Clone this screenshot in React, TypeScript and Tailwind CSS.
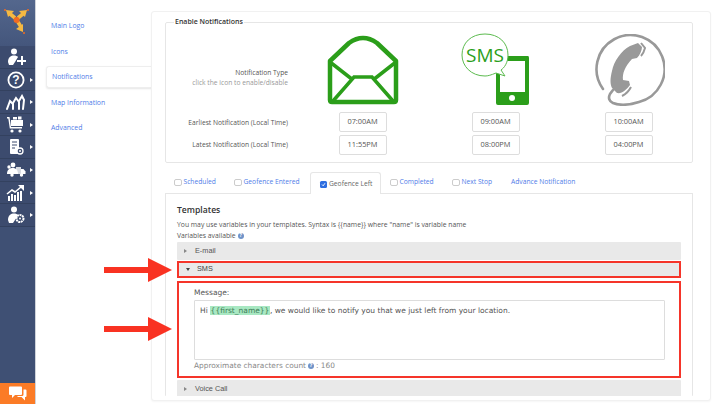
import React from "react";

const W = "#ffffff";

const Row = ({ caret = true, children }: { caret?: boolean; children: React.ReactNode }) => (
  <div className="relative flex h-[22.6px] items-center justify-center border-b border-[#33415f] bg-[#3c4b6e]">
    <div className="absolute left-[6px] top-[2px] flex h-[18px] w-[20px] items-center justify-center">{children}</div>
    {caret && <div className="absolute left-[30px] top-[9px] h-0 w-0 border-y-[2.5px] border-l-[3px] border-y-transparent border-l-white" />}
  </div>
);

const Logo = () => (
  <svg width="30" height="36" viewBox="0 0 30 36">
    <g stroke="#f5b942" strokeWidth="3.6" fill="none">
      <path d="M12 17 L6 12" /><path d="M15 17 L21 12" /><path d="M15 21 L18 26" />
    </g>
    <path d="M3 9 L11 10 L5 16Z M24 9 L16 10 L22 16Z M20 31 L13 28 L20 23Z" fill="#f5b942" />
    <circle cx="13.6" cy="19" r="3" fill="#f26b21" />
    <circle cx="2" cy="9" r="1" fill="#f26b21" /><circle cx="25" cy="9" r="1" fill="#f26b21" /><circle cx="21" cy="32" r="1" fill="#f26b21" />
  </svg>
);

const Person = ({ extra }: { extra: React.ReactNode }) => (
  <svg width="20" height="18" viewBox="0 0 20 18" fill={W}>
    <circle cx="8" cy="3.5" r="3" />
    <path d="M2 14 C2 9 5 7.5 8 7.5 C10 7.5 11 8 12 9 L9 14 L7 17 L3 17Z" />
    {extra}
  </svg>
);

const Sidebar = () => (
  <aside className="flex w-[36px] shrink-0 flex-col border-r border-[#cfd3da] bg-[#3f5074]">
    <div className="flex h-[46px] items-start justify-center bg-gradient-to-b from-[#54678d] to-[#44567c] pt-[1px]"><Logo /></div>
    <Row caret={false}><Person extra={<path d="M15 8h2v4h3v2h-3v3h-2v-3h-4v-2h4z" />} /></Row>
    <Row>
      <svg width="18" height="18" viewBox="0 0 18 18"><circle cx="9" cy="9" r="7.6" fill="none" stroke={W} strokeWidth="1.8" /><text x="9" y="13" textAnchor="middle" fontSize="12" fontWeight="700" fill={W} fontFamily="Liberation Sans">?</text></svg>
    </Row>
    <Row>
      <svg width="20" height="17" viewBox="0 0 20 17" fill="none" stroke={W} strokeWidth="2" strokeLinecap="round"><path d="M1 15 L4 7 L7 10 L7 15" /><path d="M7 9 L10 4 L13 8 L13 15" /><path d="M13 7 L16 2 L18 6 L17 15" /></svg>
    </Row>
    <Row>
      <svg width="20" height="17" viewBox="0 0 20 17" fill={W}><path d="M1 1 L3.5 1 L5 11 L16 11 L16 12.5 L3.8 12.5 L2.3 2.5 L1 2.5Z" /><rect x="5" y="4" width="12" height="6" /><rect x="7" y="1" width="4" height="2.5" /><rect x="12" y="0.5" width="3.5" height="3" /><circle cx="6" cy="15" r="1.6" /><circle cx="14" cy="15" r="1.6" /></svg>
    </Row>
    <Row>
      <svg width="18" height="18" viewBox="0 0 18 18" fill={W}><rect x="3" y="1" width="9" height="15" rx="1" /><path d="M5 4h5M5 7h5M5 10h3" stroke="#3c4b6e" strokeWidth="1" /><circle cx="13" cy="13" r="3" fill="#3c4b6e" stroke={W} strokeWidth="1.3" /><circle cx="13" cy="13" r="1" /></svg>
    </Row>
    <Row>
      <svg width="20" height="16" viewBox="0 0 20 16" fill={W}><circle cx="7" cy="3" r="2.4" /><path d="M1 12 C1 7 4 6 7 6 C10 6 12 8 12 12Z" /><rect x="10" y="5" width="5" height="7" opacity=".8" /><path d="M15 7h2.5l2 2.5V12H15z" /><circle cx="6" cy="13" r="1.7" /><circle cx="15.5" cy="13" r="1.7" /><circle cx="3" cy="5" r="1.7" /></svg>
    </Row>
    <Row>
      <svg width="20" height="18" viewBox="0 0 20 18" fill={W}><rect x="2" y="12" width="2" height="5" /><rect x="5" y="10" width="2" height="7" /><rect x="8" y="11" width="2" height="6" /><rect x="11" y="8" width="2" height="9" /><rect x="14" y="7" width="2" height="10" /><path d="M1 10 L6 6 L9 8 L15 3" fill="none" stroke={W} strokeWidth="1.6" /><path d="M12 1 H18 V7Z" /></svg>
    </Row>
    <Row>
      <Person extra={<><circle cx="14" cy="12.5" r="3.5" fill="none" stroke={W} strokeWidth="2" strokeDasharray="2 .6" /><circle cx="14" cy="12.5" r="1" /></>} />
    </Row>
    <div className="flex-1" />
    <div className="flex h-[21px] items-center justify-center bg-[#fb7b26]">
      <svg width="18" height="17" viewBox="0 0 18 17" fill={W}><path d="M1 1.5 H12 a1 1 0 0 1 1 1 V9 a1 1 0 0 1 -1 1 H6 L3 13 V10 H1 a1 1 0 0 1 -1 -1 V2.5 a1 1 0 0 1 1 -1Z" /><path d="M14.5 4.5 H16.5 a1 1 0 0 1 1 1 V11 a1 1 0 0 1 -1 1 H16 V15.5 L12.5 12 H8 L9 11 H13 a1.5 1.5 0 0 0 1.5 -1.5Z" /></svg>
    </div>
  </aside>
);

const NavItem = ({ label, active }: { label: string; active?: boolean }) => (
  <div className={active
    ? "ml-[10px] flex h-[22px] items-center rounded-l-[3px] border-y border-l border-[#eeeeee] bg-white pl-[5px] shadow-[0_1px_2px_rgba(0,0,0,.1)] my-[1.75px] -mr-px"
    : "ml-[10px] flex h-[25.5px] items-center pl-[5px]"}>
    <span className="text-[6.9px] text-[#4f7de8]">{label}</span>
  </div>
);

const Nav = () => (
  <nav className="w-[115px] shrink-0 pt-[13.5px]">
    <NavItem label="Main Logo" />
    <NavItem label="Icons" />
    <NavItem label="Notifications" active />
    <NavItem label="Map Information" />
    <NavItem label="Advanced" />
  </nav>
);

const TimeBox = ({ v }: { v: string }) => (
  <div className="mx-auto flex h-[19.5px] w-[48px] items-center justify-center rounded-[2px] border border-[#dddddd] bg-white text-[7.4px] text-[#555555]">{v}</div>
);

const Envelope = () => (
  <svg width="72" height="70" viewBox="0 0 72 70">
    <path d="M3 26 L22 8 Q36 -2 50 8 L69 26 L69 65 Q69 67 67 67 L5 67 Q3 67 3 65Z" fill="none" stroke="#2b9e1a" strokeWidth="4.5" strokeLinejoin="round" />
    <path d="M3 27 L26 45 M69 27 L46 45 M6 66 L27 42 H45 L66 66" fill="none" stroke="#2b9e1a" strokeWidth="3.5" />
  </svg>
);

const Sms = () => (
  <svg width="70" height="73" viewBox="0 0 70 73">
    <path d="M37 23 H67 Q68 23 68 25 V70 Q68 72 66 72 H37 Q35 72 35 70 V20Z" fill="#2b9e1a" />
    <rect x="39" y="28" width="25" height="31" fill="#fff" />
    <circle cx="51" cy="65" r="3" fill="#fff" />
    <path d="M24 1 C38 1 47 10 47 22 C47 30 43 35 40 37 L44 43 L35 40 C30 42 27 43 24 43 C10 43 1 33 1 22 C1 10 10 1 24 1Z" fill="#fff" stroke="#5cbb4f" strokeWidth="1" />
    <text x="24" y="29" textAnchor="middle" fontSize="19" fill="#2b9e1a" fontFamily="'Open Sans', sans-serif">SMS</text>
  </svg>
);

const Phone = () => (
  <svg width="72" height="72" viewBox="0 0 72 72">
    <path d="M10 55 A34 34 0 1 1 46 68 Q30 73 20 69 Q14 66 17 60 L20 56" fill="none" stroke="#999999" strokeWidth="2.6" strokeLinecap="round" />
    <path d="M37 12 C28 17 21 27 19 37 C17 45 17 50 19 54 L24 59 C29 60 33 56 37 51 L36 47 L30 46 C29 40 32 32 39 25 L44 24 C47 21 49 16 49 13 L45 9 Z" fill="#999999" />
    <path d="M48 9 L52 14 C51 18 50 20 48 22" fill="none" stroke="#999999" strokeWidth="2" />
    <path d="M38 53 C36 57 33 60 29 62" fill="none" stroke="#999999" strokeWidth="2" />
  </svg>
);

const Check = ({ on }: { on?: boolean }) => on ? (
  <span className="mr-[2px] flex h-[7px] w-[7px] shrink-0 items-center justify-center rounded-[1.5px] bg-[#2f6fe0]">
    <svg width="5" height="5" viewBox="0 0 5 5"><path d="M1 2.5 L2.2 3.8 L4 1.2" fill="none" stroke="#fff" strokeWidth=".9" /></svg>
  </span>
) : (
  <span className="mr-[2px] h-[7.5px] w-[7.5px] shrink-0 rounded-[2px] border border-[#cccccc] bg-white" />
);

const Tab = ({ label, box, on, w }: { label: string; box?: boolean; on?: boolean; w: string }) => (
  <div className={`flex h-[22px] items-center px-[9px] pt-[1px] text-[6.7px] ${w} ${on ? "-mb-px rounded-t-[3px] border-x border-t border-[#e6e6e6] bg-white text-[#666666]" : "text-[#4f7de8]"}`}>
    {box && <Check on={on} />}
    <span className="whitespace-nowrap">{label}</span>
  </div>
);

const Bar = ({ label, open, bold }: { label: string; open?: boolean; bold?: boolean }) => (
  <div className="flex h-full items-center rounded-[1px] bg-[#e9e9e9] pl-[7px] font-['Liberation_Sans',sans-serif] text-[7.3px] text-[#555555]">
    {open
      ? <span className="mr-[7px] h-0 w-0 border-x-[2.5px] border-t-[3px] border-x-transparent border-t-[#444444]" />
      : <span className="mr-[8px] h-0 w-0 border-y-[2.5px] border-l-[3px] border-y-transparent border-l-[#888888]" />}
    <span className={bold ? "text-[#444444]" : ""}>{label}</span>
  </div>
);

const Info = () => (
  <span className="mx-[2px] inline-flex h-[6px] w-[6px] items-center justify-center rounded-full bg-[#6f93c9] align-middle text-[5px] font-bold leading-none text-white">?</span>
);

const Arrow = ({ top }: { top: string }) => (
  <div className={`absolute left-[104px] flex items-center ${top}`}>
    <div className="h-[6px] w-[44px] bg-[#f93222]" />
    <div className="h-0 w-0 border-y-[12px] border-l-[24px] border-y-transparent border-l-[#f93222]" />
  </div>
);

export default function App() {
  return (
    <div className="relative flex h-[404px] w-[720px] overflow-hidden bg-white font-['Open_Sans',sans-serif]">
      <Sidebar />
      <Nav />
      <main className="flex-1 pr-[10px] pt-[11px]">
        <div className="h-[390px] overflow-hidden rounded-[3px] border border-[#f1f1f1] bg-white pl-[13px] pr-[17px] pt-[5px] shadow-[0_1px_2px_rgba(0,0,0,.04)]">
          <fieldset className="h-[146px] rounded-[2px] border border-[#e6e6e6] px-0 pb-0 pt-[8px]">
            <legend className="ml-[8px] px-[1px] text-[7px] font-semibold leading-[10px] text-[#333333]">Enable Notifications</legend>
            <div className="grid grid-cols-[130px_133px_133px_129px]">
              <div className="flex h-[77px] flex-col items-end justify-center pr-[8px] pt-[8px] text-right text-[6.7px] leading-[10px]">
                <span className="text-[#555555]">Notification Type</span>
                <span className="text-[#999999]">click the icon to enable/disable</span>
              </div>
              <div className="flex h-[77px] items-start justify-center"><Envelope /></div>
              <div className="flex h-[77px] items-start justify-center -mt-[2px]"><Sms /></div>
              <div className="flex h-[77px] items-start justify-center -mt-[1px] pl-[4px]"><Phone /></div>

              <div className="flex h-[23px] items-center justify-end pr-[8px] text-[6.7px] text-[#555555]">Earliest Notification (Local Time)</div>
              <div className="h-[23px]"><TimeBox v="07:00AM" /></div>
              <div className="h-[23px]"><TimeBox v="09:00AM" /></div>
              <div className="h-[23px] pl-[4px]"><TimeBox v="10:00AM" /></div>

              <div className="flex h-[19.5px] items-center justify-end pr-[8px] text-[6.7px] text-[#555555]">Latest Notification (Local Time)</div>
              <div><TimeBox v="11:55PM" /></div>
              <div><TimeBox v="08:00PM" /></div>
              <div className="pl-[4px]"><TimeBox v="04:00PM" /></div>
            </div>
          </fieldset>

          <div className="mt-[8px] flex items-end">
            <Tab label="Scheduled" box w="w-[60px]" />
            <Tab label="Geofence Entered" box w="w-[85px]" />
            <Tab label="Geofence Left" box on w="w-[71px]" />
            <Tab label="Completed" box w="w-[62px]" />
            <Tab label="Next Stop" box w="w-[59px]" />
            <Tab label="Advance Notification" w="w-[84px]" />
          </div>
          <div className="h-[203px] overflow-hidden rounded-[1px] border border-b-0 border-[#e6e6e6] px-[11px] pt-[10px]">
            <h2 className="text-[8.6px] font-semibold leading-[12px] text-[#333333]">Templates</h2>
            <p className="mt-[4px] text-[6.8px] leading-[10px] text-[#555555]">You may use variables in your templates. Syntax is {"{{name}}"} where "name" is variable name</p>
            <p className="mt-[0.5px] text-[6.8px] leading-[10px] text-[#555555]">Variables available<Info /></p>
            <div className="mt-[1.5px] h-[18px] w-[504px]"><Bar label="E-mail" /></div>
            <div className="mt-[1px] h-[17px] w-[504px] border-2 border-[#f5352a]"><Bar label="SMS" open bold /></div>
            <div className="mt-[3px] h-[97px] w-[504px] border-2 border-[#f5352a] bg-white pl-[15px] pr-[15px] pt-[5px]">
              <div className="font-['DejaVu_Sans',sans-serif] text-[7.5px] leading-[10px] text-[#555555]">Message:</div>
              <div className="mt-[2px] h-[60px] w-[471px] rounded-[1px] border border-[#dddddd] px-[5px] pt-[4px] font-['DejaVu_Sans',sans-serif] text-[7.5px] leading-[11px] text-[#555555]">
                Hi <span className="bg-[#a8e8c2] px-[0.5px] text-[#3f7d58]">{"{{first_name}}"}</span>, we would like to notify you that we just left from your location.
              </div>
              <div className="mt-[1px] font-['DejaVu_Sans',sans-serif] text-[7.4px] leading-[10px] text-[#888888]">Approximate characters count<Info />: 160</div>
            </div>
            <div className="mt-[2px] h-[18px] w-[504px]"><Bar label="Voice Call" /></div>
          </div>
        </div>
      </main>
      <Arrow top="top-[258px]" />
      <Arrow top="top-[316.5px]" />
    </div>
  );
}
